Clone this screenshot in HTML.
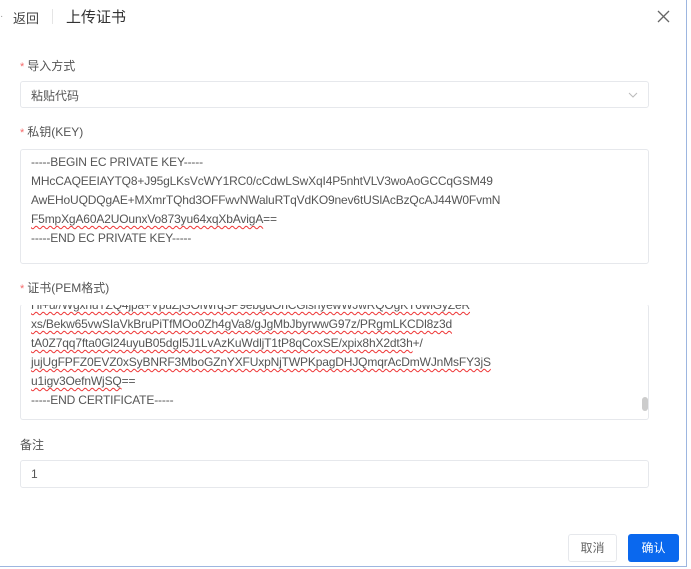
<!DOCTYPE html>
<html><head><meta charset="utf-8"><style>
*{box-sizing:border-box;margin:0;padding:0}
body{width:691px;height:569px;background:#fff;font-family:"Liberation Sans","Noto Sans CJK SC",sans-serif;position:relative;overflow:hidden;color:#333}
.a{position:absolute}
.lbl{font-size:12px;color:#555}
.lbl b{color:#f56c6c;font-weight:normal;margin-right:3px;font-size:11px}
.box{position:absolute;border:1px solid #e6e8ec;border-radius:3px;background:#fff}
.ta{font-size:12px;color:#555;line-height:19px;padding:3px 10px;white-space:pre;overflow:hidden;letter-spacing:-0.15px}
.sq{text-decoration:underline wavy #e33;text-decoration-thickness:1px;text-underline-offset:2px}
</style></head><body>
<div class="a" style="left:686px;top:0;width:1px;height:567px;background:#9db6e0"></div>
<div class="a" style="left:0;top:566px;width:687px;height:1px;background:#9db6e0"></div>
<div class="a" style="left:0;top:11px;font-size:10px;color:#999">·</div>
<div class="a" style="left:13px;top:8px;font-size:13px;color:#444">返回</div>
<div class="a" style="left:52px;top:9px;width:1px;height:15px;background:#e5e5e5"></div>
<div class="a" style="left:66px;top:6px;font-size:15px;color:#333">上传证书</div>
<svg class="a" style="left:657px;top:10px" width="13" height="13" viewBox="0 0 13 13"><path d="M1 1L12 12M12 1L1 12" stroke="#666" stroke-width="1.3"/></svg>

<div class="a lbl" style="left:20px;top:57px"><b>*</b>导入方式</div>
<div class="box" style="left:20px;top:81px;width:629px;height:27px"><span class="a" style="left:10px;top:5px;font-size:12px;color:#555">粘贴代码</span>
<svg class="a" style="left:607px;top:10px" width="10" height="6" viewBox="0 0 10 6"><path d="M1 1L5 5L9 1" stroke="#bbb" fill="none"/></svg></div>

<div class="a lbl" style="left:20px;top:123px"><b>*</b>私钥(KEY)</div>
<div class="box ta" style="left:20px;top:149px;width:629px;height:115px">-----BEGIN EC PRIVATE KEY-----
MHcCAQEEIAYTQ8+J95gLKsVcWY1RC0/cCdwLSwXqI4P5nhtVLV3woAoGCCqGSM49
AwEHoUQDQgAE+MXmrTQhd3OFFwvNWaluRTqVdKO9nev6tUSlAcBzQcAJ44W0FvmN
<span class="sq">F5mpXgA60A2UOunxVo873yu64xqXbAvigA</span>==
-----END EC PRIVATE KEY-----</div>

<div class="a lbl" style="left:20px;top:279px"><b>*</b>证书(PEM格式)</div>
<div class="box ta" style="left:20px;top:304px;width:629px;height:116px;padding-top:0;border-top-color:#fff"><div style="margin-top:-9px"><span class="sq">Hl+u//WgxhuTZQ4jpa+VpuZjGOlWrqSP9ebgdOhCGlshyewWJwRQOgKT6wlGyZeR</span>
<span class="sq">xs/Bekw65vwSIaVkBruPiTfMOo0Zh4gVa8/gJgMbJbyrwwG97z/PRgmLKCDl8z3d</span>
<span class="sq">tA0Z7qq7fta0Gl24uyuB05dgI5J1LvAzKuWdljT1tP8qCoxSE/xpix8hX2dt3h</span>+/
<span class="sq">jujUgFPFZ0EVZ0xSyBNRF3MboGZnYXFUxpNjTWPKpagDHJQmqrAcDmWJnMsFY3jS</span>
<span class="sq">u1igv3OefnWjSQ</span>==
-----END CERTIFICATE-----</div>
<div class="a" style="left:621px;top:92px;width:6px;height:14px;background:#ccc;border-radius:3px"></div></div>

<div class="a lbl" style="left:20px;top:436px">备注</div>
<div class="box" style="left:20px;top:460px;width:629px;height:28px"><span class="a" style="left:10px;top:6px;font-size:12px;color:#555">1</span></div>

<div class="box" style="left:568px;top:534px;width:49px;height:28px;font-size:12px;color:#666;text-align:center;line-height:26px">取消</div>
<div class="a" style="left:628px;top:534px;width:51px;height:28px;background:#0a68ee;border-radius:3px;font-size:12px;color:#fff;text-align:center;line-height:28px">确认</div>
</body></html>
